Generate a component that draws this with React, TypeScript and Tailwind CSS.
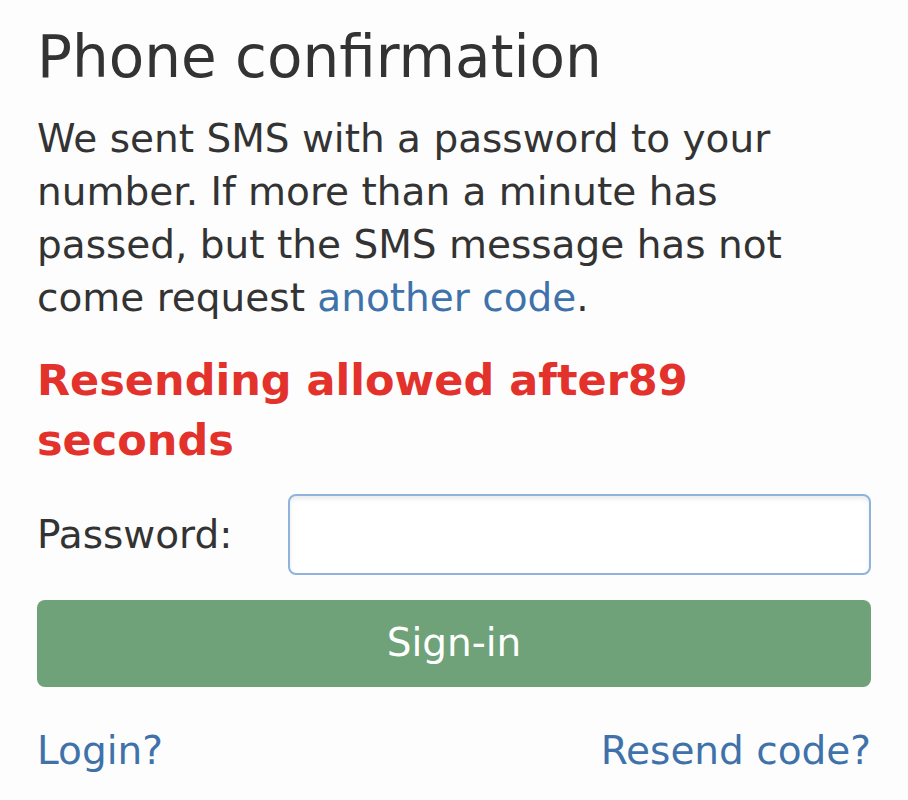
import React from 'react';

const font = { fontFamily: '"DejaVu Sans", Verdana, sans-serif' };

const PhoneConfirm: React.FC = () => {
  return (
    <div className="min-h-screen bg-[#fdfdfd] px-[37px] pt-[22px] text-[#333333]" style={font}>
      <h1 className="text-[58px] leading-[70px] font-normal">Phone confirmation</h1>
      <p className="mt-[20px] text-[39px] leading-[53px]">
        We sent SMS with a password to your number. If more than a minute has passed, but the SMS message has not
        come request <a href="#" className="text-[#3f72aa]">another code</a>.
      </p>
      <div className="mt-[26px] text-[43px] leading-[60px] font-bold text-[#e2322b]">
        Resending allowed after89 seconds
      </div>
      <div className="mt-[24px] flex items-center">
        <label className="w-[251px] text-[39px] leading-[48px]">Password:</label>
        <input
          type="password"
          className="h-[81px] flex-1 rounded-[8px] border-2 border-[#8fb3dc] bg-white shadow-[inset_0_3px_4px_rgba(0,0,0,0.08)] outline-none"
        />
      </div>
      <button className="mt-[25px] h-[87px] w-full rounded-[8px] bg-[#6fa279] text-[39px] text-white">Sign-in</button>
      <div className="mt-[40px] flex justify-between text-[39px] leading-[48px] text-[#3f72aa]">
        <a href="#">Login?</a>
        <a href="#">Resend code?</a>
      </div>
    </div>
  );
};

export default function App() {
  return <PhoneConfirm />;
}
